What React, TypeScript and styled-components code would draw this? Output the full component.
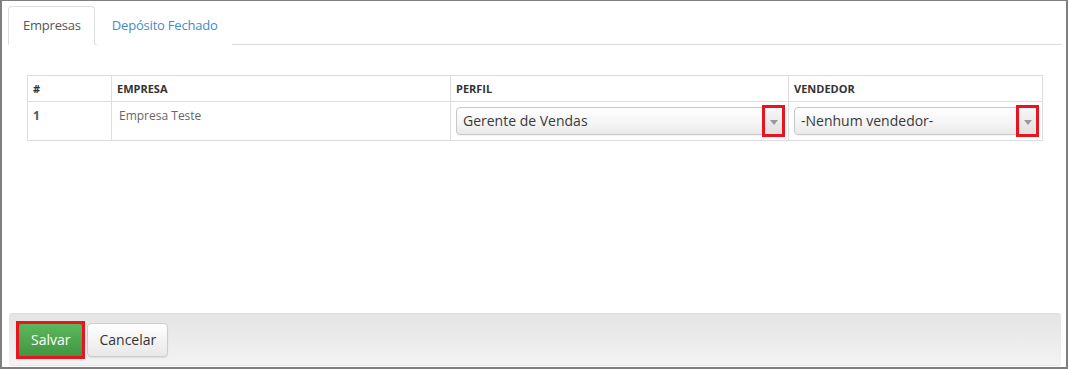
import React from "react";
import styled, { createGlobalStyle, css } from "styled-components";

const Global = createGlobalStyle`
  html, body { margin: 0; padding: 0; background: #fff; }
  body { font-family: "Open Sans", "Noto Sans", Arial, sans-serif; }
  * { box-sizing: border-box; }
`;

const redBox = css`
  position: relative;
  &::before {
    content: "";
    position: absolute;
    left: -3px;
    top: -3px;
    right: -3px;
    bottom: -3px;
    border: 3px solid #e8141f;
    pointer-events: none;
  }
`;

const Frame = styled.div`
  width: 1068px;
  height: 369px;
  border-style: solid;
  border-color: #7f7f7f;
  border-width: 1px 2px 2px 2px;
  padding: 5px 4px 1px 5px;
  display: flex;
  flex-direction: column;
  background: #fff;
`;

const TabBar = styled.ul`
  list-style: none;
  margin: 0 0 0 1px;
  padding: 0;
  display: flex;
  border-bottom: 1px solid #ddd;
`;

const Tab = styled.li<{ $active?: boolean }>`
  margin-right: 2px;
  margin-bottom: -1px;
  padding: 9px 13px 10px 14px;
  line-height: 18px;
  font-size: 13px;
  letter-spacing: -0.2px;
  color: ${(p) => (p.$active ? "#555" : "#428bca")};
  background: #fff;
  border: 1px solid ${(p) => (p.$active ? "#ddd" : "transparent")};
  border-bottom-color: ${(p) => (p.$active ? "#fff" : "transparent")};
  border-radius: 4px 4px 0 0;
  cursor: pointer;
`;

const TabContent = styled.div`
  flex: 1;
  padding: 30px 20px 0 20px;
`;

const Table = styled.table`
  width: 1015px;
  border-collapse: collapse;
  table-layout: fixed;
`;

const Th = styled.th<{ $w: number }>`
  width: ${(p) => p.$w}px;
  text-align: left;
  border: 1px solid #ddd;
  padding: 5px 5px;
  font-size: 11px;
  line-height: 15px;
  font-weight: 700;
  color: #333;
  text-transform: uppercase;
`;

const Td = styled.td<{ $bold?: boolean; $indent?: number }>`
  border: 1px solid #ddd;
  padding: 5px 5px 5px ${(p) => 5 + (p.$indent ?? 0)}px;
  vertical-align: top;
  font-size: 12px;
  line-height: 18px;
  font-weight: ${(p) => (p.$bold ? 700 : 400)};
  color: ${(p) => (p.$bold ? "#555" : "#666")};
`;

const Select = styled.div`
  display: flex;
  align-items: stretch;
  height: 28px;
  border: 1px solid #c8c8c8;
  border-radius: 4px;
  background: linear-gradient(#ffffff 0%, #f4f4f4 60%, #e9e9e9 100%);
  box-shadow: 0 1px 1px rgba(0, 0, 0, 0.05);
`;

const SelectText = styled.span`
  flex: 1;
  padding-left: 6px;
  font-size: 14px;
  line-height: 26px;
  color: #3a3a3a;
  white-space: nowrap;
  overflow: hidden;
`;

const Arrow = styled.span`
  ${redBox}
  width: 17px;
  display: flex;
  align-items: center;
  justify-content: center;
  background: linear-gradient(#f7f7f7, #e0e0e0);
  &::after {
    content: "";
    margin-top: 2px;
    border-left: 4px solid transparent;
    border-right: 4px solid transparent;
    border-top: 5px solid #999;
  }
`;

const Footer = styled.div`
  height: 53px;
  display: flex;
  align-items: center;
  gap: 4px;
  padding: 0 9px;
  margin-left: 2px;
  margin-right: 1px;
  border-top: 1px solid #ddd;
  border-radius: 3px;
  background: linear-gradient(#e4e4e4, #f3f3f3);
  box-shadow: inset 0 -1px 0 #e6e6e6;
`;

const Button = styled.button<{ $primary?: boolean }>`
  ${(p) => (p.$primary ? redBox : "")}
  height: 34px;
  padding: 0 ${(p) => (p.$primary ? 12 : 11)}px;
  font-family: "Open Sans", "Noto Sans", Arial, sans-serif;
  font-size: 14px;
  line-height: 20px;
  border-radius: 4px;
  cursor: pointer;
  color: ${(p) => (p.$primary ? "#fff" : "#333")};
  border: 1px solid ${(p) => (p.$primary ? "#3e8f3e" : "#ccc")};
  background: ${(p) =>
    p.$primary
      ? "linear-gradient(#5cb85c, #419641)"
      : "linear-gradient(#ffffff, #e8e8e8)"};
  box-shadow: 0 1px 1px rgba(0, 0, 0, 0.08);
`;

export default function App() {
  return (
    <>
      <Global />
      <Frame>
        <TabBar>
          <Tab $active>Empresas</Tab>
          <Tab>Depósito Fechado</Tab>
        </TabBar>
        <TabContent>
          <Table>
            <thead>
              <tr>
                <Th $w={84}>#</Th>
                <Th $w={339}>Empresa</Th>
                <Th $w={338}>Perfil</Th>
                <Th $w={254}>Vendedor</Th>
              </tr>
            </thead>
            <tbody>
              <tr>
                <Td $bold>1</Td>
                <Td $indent={2}>Empresa Teste</Td>
                <Td>
                  <Select>
                    <SelectText>Gerente de Vendas</SelectText>
                    <Arrow />
                  </Select>
                </Td>
                <Td>
                  <Select>
                    <SelectText>-Nenhum vendedor-</SelectText>
                    <Arrow />
                  </Select>
                </Td>
              </tr>
            </tbody>
          </Table>
        </TabContent>
        <Footer>
          <Button $primary>Salvar</Button>
          <Button>Cancelar</Button>
        </Footer>
      </Frame>
    </>
  );
}
